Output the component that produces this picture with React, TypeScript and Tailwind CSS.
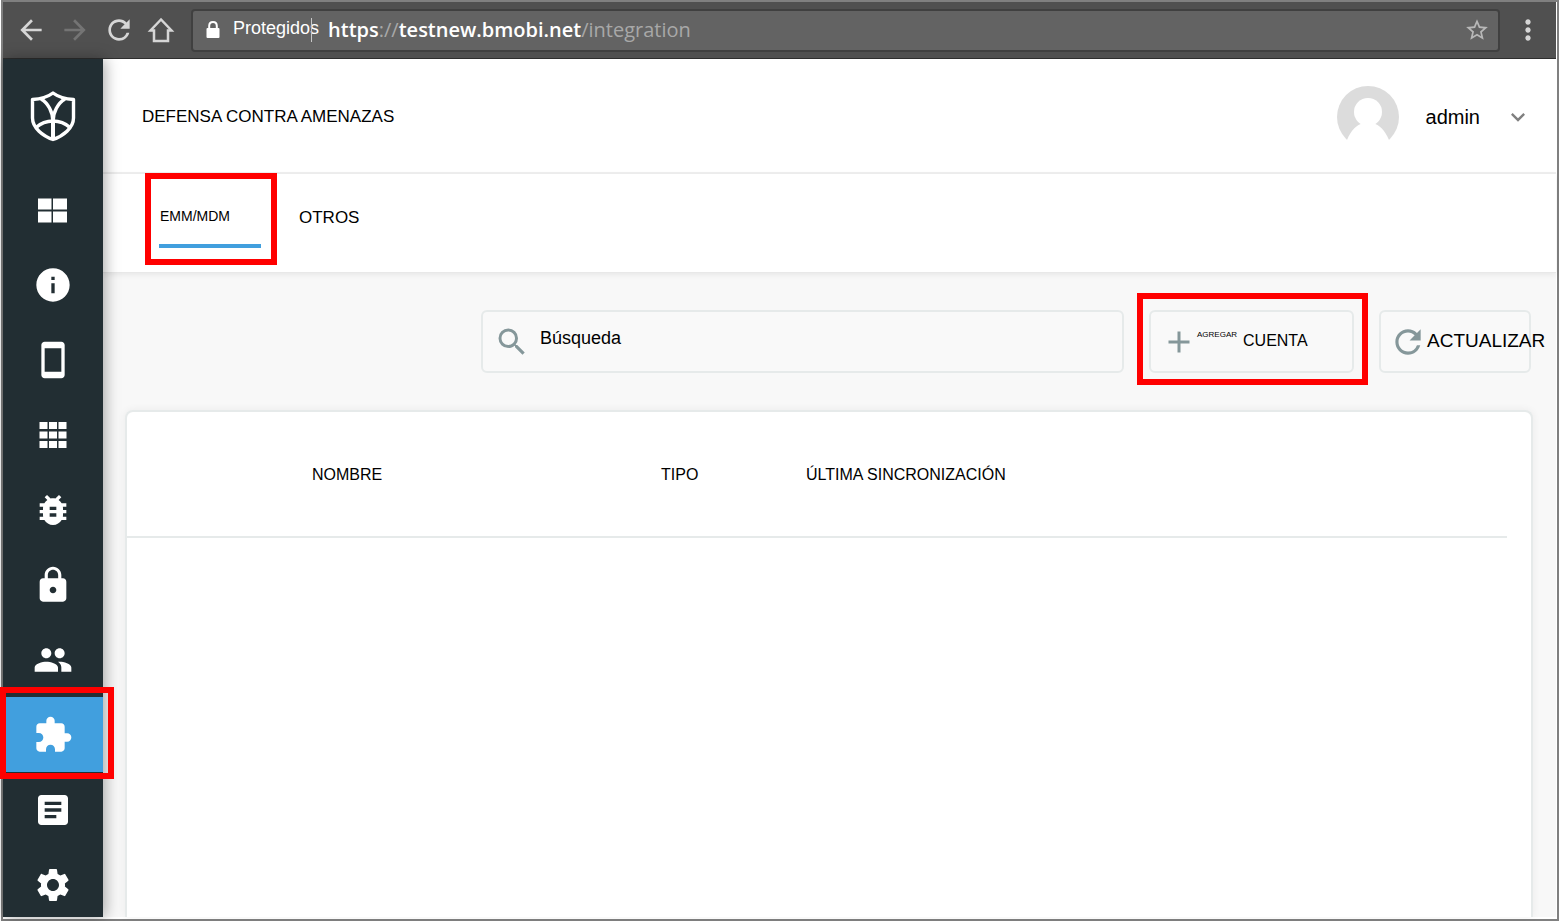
import React from "react";
import {
  MdInfo,
  MdStayCurrentPortrait,
  MdBugReport,
  MdLock,
  MdGroup,
  MdExtension,
  MdArticle,
  MdSettings,
  MdArrowBack,
  MdArrowForward,
  MdRefresh,
  MdSearch,
  MdAdd,
  MdStarBorder,
  MdMoreVert,
  MdKeyboardArrowDown,
} from "react-icons/md";

function ShieldLogo() {
  return (
    <svg viewBox="0 0 46 52" className="h-[52px] w-[46px]" fill="none" stroke="white" strokeWidth="3.400" strokeLinejoin="round" aria-hidden="true">
      <path d="M23 3C19 6 12 9 2.500 9.500V28C2.500 38 13 46 23 49.500C33 46 43.500 38 43.500 28V9.500C34 9 27 6 23 3Z" />
      <path d="M11 9C18 13 23 22 23 32C23 22 28 13 35 9" />
      <path d="M6 37.500C11 33 17 31 23 31C29 31 35 33 40 37.500" />
      <path d="M23 27V49" strokeWidth="4" />
    </svg>
  );
}

function PanesIcon() {
  return (
    <svg viewBox="0 0 40 40" className="size-10" fill="currentColor" aria-hidden="true">
      <path d="M5 8.500H18.500V19.500H5ZM20 8.500H34V19.500H20ZM5 21.500H18.500V32.500H5ZM20 21.500H34V32.500H20Z" />
    </svg>
  );
}

function GridIcon() {
  return (
    <svg viewBox="0 0 40 40" className="size-10" fill="currentColor" aria-hidden="true">
      {[7, 16.5, 26].map((y) =>
        [6.5, 16, 25.5].map((x) => <rect key={`${x}-${y}`} x={x} y={y} width="8" height="7" />),
      )}
    </svg>
  );
}

function HomeIcon() {
  return (
    <svg viewBox="0 0 28 28" className="size-7" fill="none" stroke="currentColor" strokeWidth="2.500" aria-hidden="true">
      <path d="M14 3.500L3.500 14.500H7V25H21V14.500H24.500Z" />
    </svg>
  );
}

function PadlockIcon() {
  return (
    <svg viewBox="0 0 20 20" className="size-5 text-white" fill="none" stroke="currentColor" aria-hidden="true">
      <path d="M6.200 9V6C6.200 3.500 7.800 2 10 2C12.200 2 13.800 3.500 13.800 6V9" strokeWidth="2" />
      <rect x="3.500" y="8" width="13" height="10" rx="1" fill="currentColor" stroke="none" />
    </svg>
  );
}

function Avatar() {
  return (
    <svg viewBox="0 0 62 62" className="size-[62px]" aria-hidden="true">
      <circle cx="31" cy="31" r="31" fill="#dcdcdc" />
      <circle cx="31" cy="26" r="14" fill="white" />
      <path d="M0 62V54H10C14 44 20 39 25 37.500H37C42 39 48 44 52 54H62V62Z" fill="white" />
    </svg>
  );
}

function Highlight({ className }: { className: string }) {
  return <span aria-hidden="true" className={`pointer-events-none absolute z-20 border-6 border-[#ff0000] ${className}`} />;
}

const navItems = [
  { label: "Panel", icon: <PanesIcon /> },
  { label: "Información", icon: <MdInfo /> },
  { label: "Dispositivos", icon: <MdStayCurrentPortrait /> },
  { label: "Aplicaciones", icon: <GridIcon /> },
  { label: "Amenazas", icon: <MdBugReport /> },
  { label: "Seguridad", icon: <MdLock /> },
  { label: "Usuarios", icon: <MdGroup /> },
  { label: "Integración", icon: <MdExtension />, active: true },
  { label: "Informes", icon: <MdArticle /> },
  { label: "Ajustes", icon: <MdSettings /> },
];

function BrowserBar() {
  return (
    <div className="flex h-[57px] shrink-0 items-center border-b border-[#2e2e2e] bg-[#505050] pr-3 pl-3 text-[#d6d6d6]">
      <div className="flex items-center gap-3">
        <button aria-label="Atrás"><MdArrowBack className="size-8" /></button>
        <button aria-label="Adelante" className="text-[#747474]"><MdArrowForward className="size-8" /></button>
        <button aria-label="Recargar"><MdRefresh className="size-8" /></button>
        <button aria-label="Inicio"><HomeIcon /></button>
      </div>
      <div className="ml-4 flex h-[43px] flex-1 items-center rounded-sm border-2 border-[#404040] bg-[#636363] pr-2 pl-2.5">
        <PadlockIcon />
        <span className="mb-1 ml-2.5 font-['Liberation_Sans',sans-serif] text-lg leading-6 text-white">Protegidos</span>
        <span className="-ml-2 h-6 w-px bg-[#c8c8c8]" />
        <span className="ml-4 font-['Open_Sans',sans-serif] text-xl text-[#a8a8a8]">
          <span className="font-semibold text-white">https</span>://
          <span className="font-semibold text-white">testnew.bmobi.net</span>/integration
        </span>
        <button aria-label="Añadir a favoritos" className="ml-auto"><MdStarBorder className="size-[26px] text-[#b8b8b8]" /></button>
      </div>
      <button aria-label="Menú" className="ml-3"><MdMoreVert className="size-8" /></button>
    </div>
  );
}

function Sidebar() {
  return (
    <aside className="relative z-10 flex w-[100px] shrink-0 flex-col bg-[#222e33] text-white shadow-[2px_0_14px_rgba(0,0,0,0.35)]">
      <div className="flex h-[113px] shrink-0 items-center justify-center">
        <ShieldLogo />
      </div>
      <nav>
        {navItems.map((item) => (
          <a
            key={item.label}
            href="#"
            aria-label={item.label}
            className={`relative flex h-[75px] items-center justify-center text-[40px] ${item.active ? "bg-[#419fde]" : ""}`}
          >
            {item.icon}
            {item.active && <Highlight className="-top-[10px] -right-[11px] -bottom-[7px] -left-[3px]" />}
          </a>
        ))}
      </nav>
    </aside>
  );
}

function Toolbar() {
  const box = "h-[63px] rounded-md border-2 border-[#e6eaea]";
  return (
    <div className="flex gap-[25px] pr-0.5 pl-[356px]">
      <label className={`${box} flex flex-1 items-center bg-[#f9f9f9] pl-[11px]`}>
        <MdSearch className="size-9 text-[#85979a]" />
        <input
          type="text"
          aria-label="Búsqueda"
          placeholder="Búsqueda"
          className="mb-2 ml-2.5 min-w-0 flex-1 bg-transparent text-lg text-black outline-none placeholder:text-black placeholder:opacity-100"
        />
      </label>
      <button className={`${box} relative flex w-[205px] items-center bg-[#f9f9f9] pl-2.5 whitespace-nowrap`}>
        <MdAdd className="size-9 text-[#85979a]" />
        <span className="mb-3.5 text-[8px] leading-3">AGREGAR</span>
        <span className="mb-0.5 ml-1.5 text-base">CUENTA</span>
        <Highlight className="-top-[19px] -right-[16px] -bottom-[14px] -left-[14px]" />
      </button>
      <button className={`${box} flex w-[152px] items-center bg-[#f9f9f9] pl-2 whitespace-nowrap`}>
        <MdRefresh className="size-[38px] shrink-0 text-[#85979a]" />
        <span className="text-[19px]">ACTUALIZAR</span>
      </button>
    </div>
  );
}

export default function App() {
  return (
    <div className="h-screen overflow-hidden bg-white pl-px font-['Liberation_Sans',sans-serif] text-black">
      <div className="flex h-full flex-col border-2 border-[#808080] pr-px pb-[2px]">
        <BrowserBar />
        <div className="flex min-h-0 flex-1">
          <Sidebar />
          <main className="flex min-w-0 flex-1 flex-col bg-[#f8f8f8]">
            <header className="flex h-[115px] shrink-0 items-center justify-between border-b-2 border-[#efefef] bg-white pt-0.5 pr-6 pl-[39px]">
              <h1 className="text-[17px]">DEFENSA CONTRA AMENAZAS</h1>
              <button className="flex items-center text-xl">
                <Avatar />
                <span className="ml-[27px]">admin</span>
                <MdKeyboardArrowDown className="ml-6 size-7 text-[#808080]" />
              </button>
            </header>
            <div role="tablist" className="flex h-[99px] shrink-0 items-center border-b border-[#e8e8e8] bg-white pb-3 pl-14 shadow-[0_2px_6px_rgba(0,0,0,0.07)]">
              <button role="tab" aria-selected="true" className="relative flex h-[62px] w-[102px] items-center border-b-4 border-[#419fde] pt-0.5 pl-px text-sm">
                EMM/MDM
                <Highlight className="-top-[13px] -right-[16px] -bottom-[21px] -left-[14px]" />
              </button>
              <button role="tab" aria-selected="false" className="ml-[38px] pt-0.5 text-[17px]">OTROS</button>
            </div>
            <section className="flex min-h-0 flex-1 flex-col gap-[37px] pt-[37px] pr-[23px] pl-[22px]">
              <Toolbar />
              <div className="flex-1 rounded-t-lg border-2 border-b-0 border-[#e6eaea] bg-white pr-6 shadow-[0_0_8px_rgba(0,0,0,0.06)]">
                <table className="w-full table-fixed text-left">
                  <thead>
                    <tr className="h-[125px] border-b-2 border-[#e6eaea] text-base">
                      <th className="w-[185px]" aria-label="Selección" />
                      <th className="w-[349px] pt-0.5 font-normal">NOMBRE</th>
                      <th className="w-[145px] pt-0.5 font-normal">TIPO</th>
                      <th className="pt-0.5 font-normal">ÚLTIMA SINCRONIZACIÓN</th>
                    </tr>
                  </thead>
                </table>
              </div>
            </section>
          </main>
        </div>
      </div>
    </div>
  );
}
